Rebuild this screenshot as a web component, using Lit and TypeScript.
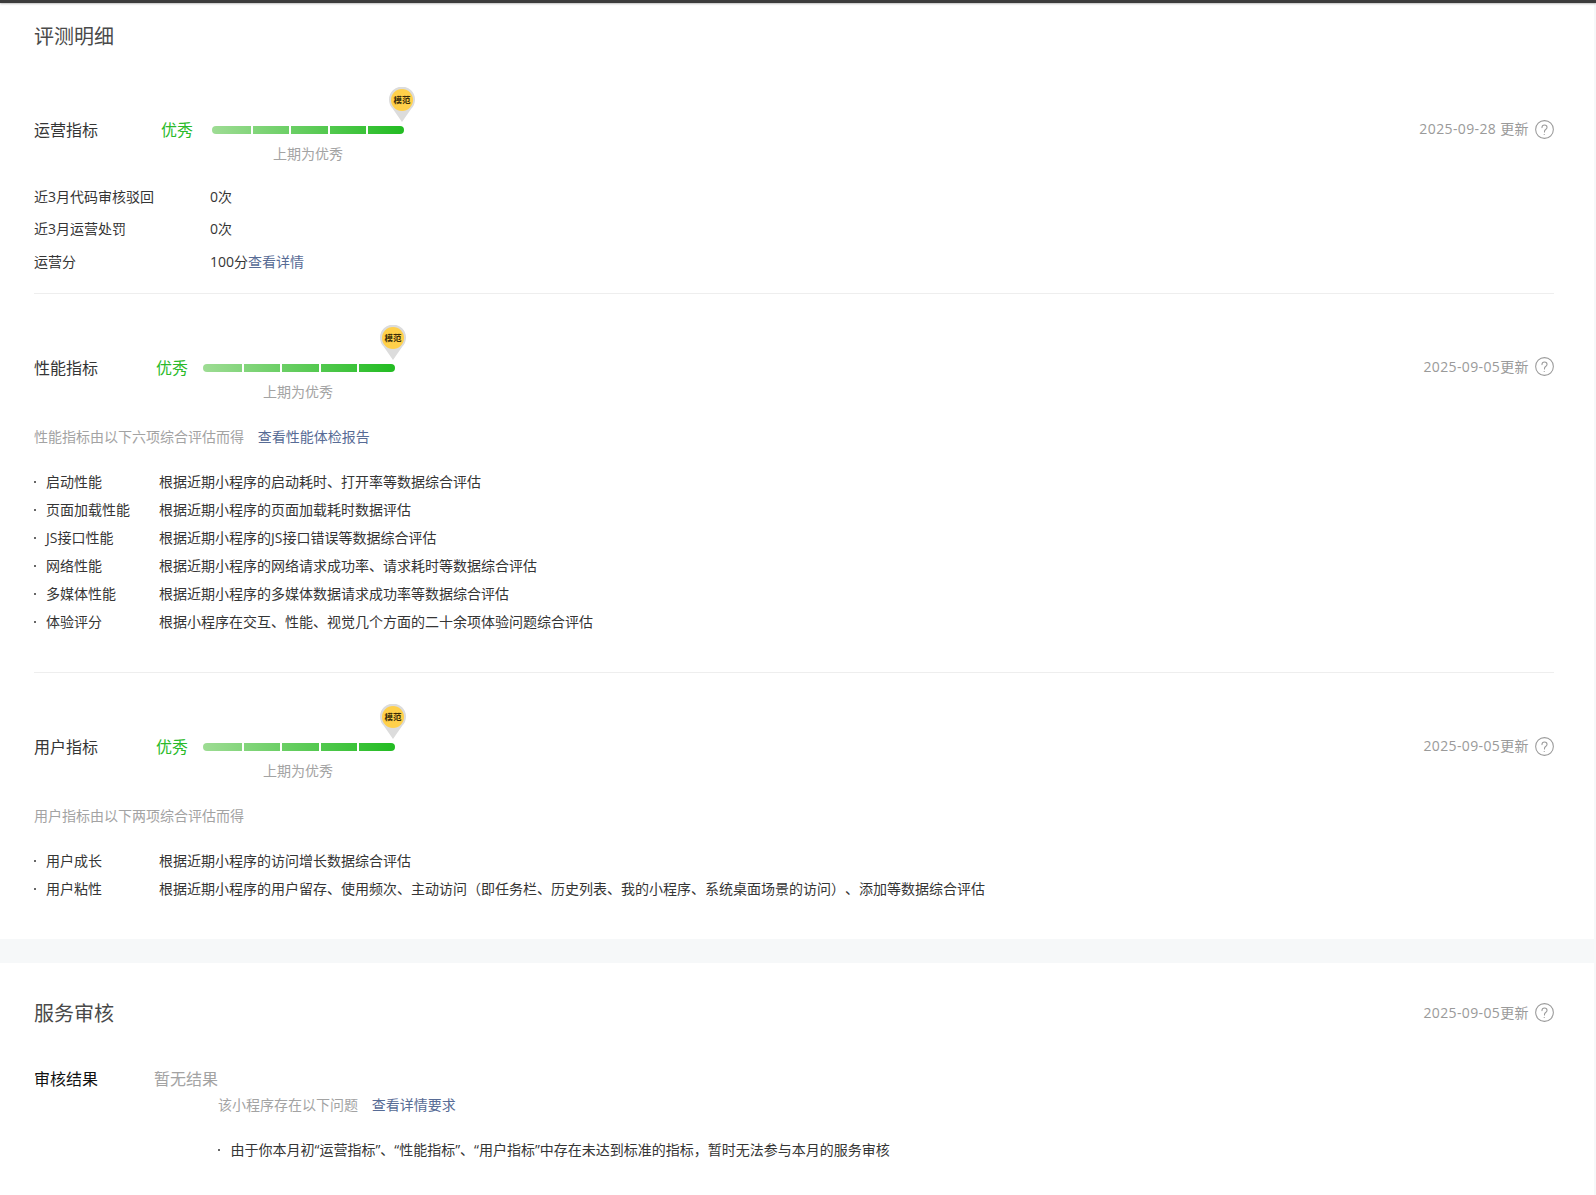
import { LitElement, html, css } from "lit";
import { customElement } from "lit/decorators.js";

const help = html`<svg class="help" viewBox="0 0 18 18" width="19" height="19" fill="none" stroke="#9a9a9a" stroke-width="1"><circle cx="9" cy="9" r="8.4"/><path d="M6.6 7.2c0-1.4 1-2.4 2.4-2.4s2.4 1 2.4 2.2c0 1-.6 1.5-1.3 2-.7.5-1.1.9-1.1 1.8v.6" stroke-linecap="round"/><path d="M8.8 13.2v.8" stroke-width="1.2"/></svg>`;

function meter() {
  return html`<div class="meter">
    <div class="pin">
      <svg viewBox="0 0 26 35" width="26" height="35"><path d="M13 35 3.6 21.6A13 13 0 1 1 22.4 21.6Z" fill="#dcdcdc"/><circle cx="13" cy="13" r="11" fill="#ffd04a"/></svg>
      <span class="pin-text">模范</span>
    </div>
    <div class="bar"><i></i><i></i><i></i><i></i><i></i></div>
    <div class="prev">上期为优秀</div>
  </div>`;
}

function head(name: string, date: string, cls: string) {
  return html`<div class="head ${cls}">
    <div class="label">${name}</div>
    <div class="grade">优秀</div>
    ${meter()}
    <div class="date"><span>${date}</span>${help}</div>
  </div>`;
}

function list(rows: [string, string][]) {
  return html`<div class="list">
    ${rows.map(
      ([a, b]) => html`<div class="item"><span class="dot"></span><span>${a}</span><span>${b}</span></div>`
    )}
  </div>`;
}

@customElement("app-root")
export class AppRoot extends LitElement {
  static styles = css`
    :host {
      display: block;
      background: #f6f8f9;
      height: 1195px;
      overflow: hidden;
      font-family: "Open Sans", "Noto Sans CJK SC", sans-serif;
      font-size: 14px;
      color: #353535;
      text-spacing-trim: space-all;
    }
    .topbar {
      height: 3px;
      background: #3c3c3c;
      box-shadow: 0 1px 2px rgba(0, 0, 0, 0.25);
      position: relative;
    }
    .card {
      width: 1594px;
      box-sizing: border-box;
      background: #fff;
      padding: 0 40px 0 34px;
    }
    .card.one {
      height: 936px;
      padding-top: 19.5px;
    }
    .card.two {
      margin-top: 24px;
      height: 232px;
      padding-top: 36.5px;
    }
    .title {
      font-size: 20px;
      line-height: 28px;
      color: #4a4a4a;
      font-weight: 400;
      margin: 0;
    }
    .title-row {
      display: flex;
      align-items: flex-start;
      justify-content: space-between;
    }
    .head {
      display: flex;
      align-items: flex-start;
    }
    .head.first {
      margin-top: 65.5px;
    }
    .label {
      width: 127px;
      font-size: 16px;
      line-height: 28px;
    }
    .narrow .label {
      width: 122px;
    }
    .grade {
      width: 32px;
      font-size: 16px;
      line-height: 28px;
      color: #2aba2a;
      margin-right: 19px;
    }
    .narrow .grade {
      margin-right: 15px;
    }
    .meter {
      width: 192px;
      padding-top: 10px;
      position: relative;
    }
    .pin {
      position: absolute;
      left: 177px;
      top: -29px;
      width: 26px;
      height: 35px;
    }
    .pin svg {
      display: block;
    }
    .pin-text {
      position: absolute;
      left: 0;
      top: 5px;
      width: 26px;
      text-align: center;
      font-size: 8.5px;
      line-height: 16px;
      font-weight: 700;
      color: #3a2c08;
    }
    .bar {
      display: flex;
      gap: 2px;
      height: 8px;
      border-radius: 4px;
      overflow: hidden;
      background: linear-gradient(90deg, #9edc94, #22bc22);
    }
    .bar i {
      flex: 1;
      position: relative;
    }
    .bar i:first-child {
      flex: 0 0 39px;
    }
    .bar i + i::before {
      content: "";
      position: absolute;
      left: -2px;
      top: 0;
      bottom: 0;
      width: 2px;
      background: #fff;
    }
    .prev {
      margin-top: 10px;
      line-height: 20px;
      text-align: center;
      color: #a3a3a3;
    }
    .narrow .prev {
      padding-right: 2px;
    }
    .date {
      margin-left: auto;
      display: flex;
      align-items: center;
      gap: 6px;
      height: 26px;
      color: #9a9a9a;
      letter-spacing: 0.38px;
    }
    .date span {
      padding-bottom: 2px;
    }
    .help {
      display: block;
    }
    .rows {
      margin-top: 16.5px;
      padding-bottom: 14.5px;
    }
    .row {
      display: flex;
      line-height: 32.5px;
    }
    .row > span:first-child {
      width: 176px;
    }
    a {
      color: #576b95;
      text-decoration: none;
    }
    .divider {
      height: 1px;
      background: #eeeeee;
    }
    .sec2 {
      padding-top: 60px;
    }
    .desc {
      margin-top: 25.5px;
      line-height: 20px;
      color: #a3a3a3;
    }
    .user .desc {
      margin-top: 24.5px;
    }
    .desc a {
      margin-left: 10px;
    }
    .list {
      margin-top: 21px;
    }
    .sec2 .list {
      padding-bottom: 36px;
    }
    .item {
      display: grid;
      grid-template-columns: 12px 113px 1fr;
      line-height: 28px;
      align-items: center;
    }
    .dot {
      width: 2px;
      height: 2px;
      background: #353535;
      border-radius: 50%;
    }
    .result {
      margin-top: 37.5px;
      display: flex;
      line-height: 28px;
      font-size: 16px;
    }
    .result b {
      width: 120px;
      font-weight: 400;
      color: #111;
    }
    .result span {
      color: #a3a3a3;
    }
    .detail {
      margin-left: 184px;
    }
    .detail .desc {
      margin-top: 1.5px;
    }
    .detail .list {
      margin-top: 21.5px;
    }
    .detail .item {
      grid-template-columns: 12.5px 1fr;
    }
  `;

  render() {
    return html`
      <div class="topbar"></div>
      <div class="card one">
        <h2 class="title">评测明细</h2>
        ${head("运营指标", "2025-09-28 更新", "first")}
        <div class="rows">
          <div class="row"><span>近3月代码审核驳回</span><span>0次</span></div>
          <div class="row"><span>近3月运营处罚</span><span>0次</span></div>
          <div class="row"><span>运营分</span><span>100分<a href="#">查看详情</a></span></div>
        </div>
        <div class="divider"></div>
        <div class="sec2">
          ${head("性能指标", "2025-09-05更新", "narrow")}
          <div class="desc">性能指标由以下六项综合评估而得 <a href="#">查看性能体检报告</a></div>
          ${list([
            ["启动性能", "根据近期小程序的启动耗时、打开率等数据综合评估"],
            ["页面加载性能", "根据近期小程序的页面加载耗时数据评估"],
            ["JS接口性能", "根据近期小程序的JS接口错误等数据综合评估"],
            ["网络性能", "根据近期小程序的网络请求成功率、请求耗时等数据综合评估"],
            ["多媒体性能", "根据近期小程序的多媒体数据请求成功率等数据综合评估"],
            ["体验评分", "根据小程序在交互、性能、视觉几个方面的二十余项体验问题综合评估"],
          ])}
        </div>
        <div class="divider"></div>
        <div class="sec2 user">
          ${head("用户指标", "2025-09-05更新", "narrow")}
          <div class="desc">用户指标由以下两项综合评估而得</div>
          ${list([
            ["用户成长", "根据近期小程序的访问增长数据综合评估"],
            ["用户粘性", "根据近期小程序的用户留存、使用频次、主动访问（即任务栏、历史列表、我的小程序、系统桌面场景的访问）、添加等数据综合评估"],
          ])}
        </div>
      </div>
      <div class="card two">
        <div class="title-row">
          <h2 class="title">服务审核</h2>
          <div class="date"><span>2025-09-05更新</span>${help}</div>
        </div>
        <div class="result"><b>审核结果</b><span>暂无结果</span></div>
        <div class="detail">
          <div class="desc">该小程序存在以下问题 <a href="#">查看详情要求</a></div>
          <div class="list">
            <div class="item"><span class="dot"></span><span>由于你本月初“运营指标”、“性能指标”、“用户指标”中存在未达到标准的指标，暂时无法参与本月的服务审核</span></div>
          </div>
        </div>
      </div>
    `;
  }
}
